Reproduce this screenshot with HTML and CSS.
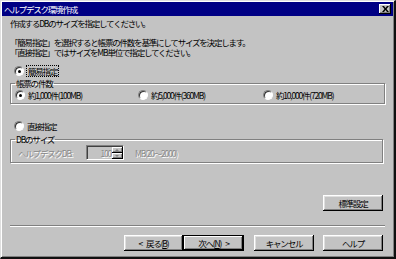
FILE: index.html
```html
<!DOCTYPE html>
<html lang="ja">
<head>
<meta charset="utf-8">
<link rel="stylesheet" href="styles.css">
</head>
<body>
<div class="window">
  <div class="titlebar">
    <span class="title">ヘルプデスク環境作成</span>
    <span class="close"><svg width="7" height="6" viewBox="0 0 7 6"><path d="M0 0h2l1.5 2 1.5-2h2l-2.5 3 2.5 3h-2l-1.5-2-1.5 2h-2l2.5-3z" fill="#000"/></svg></span>
  </div>
  <div class="content">
    <p class="line l1">作成するDBのサイズを指定してください。</p>
    <p class="line l2">「簡易指定」を選択すると帳票の件数を基準にしてサイズを決定します。</p>
    <p class="line l3">「直接指定」ではサイズをMB単位で指定してください。</p>

    <div class="opt opt1"><span class="radio checked"></span><span class="focus">簡易指定</span></div>
    <fieldset class="group g1">
      <legend>帳票の件数</legend>
      <div class="choices">
        <div class="opt c1"><span class="radio checked"></span><span>約1,000件(100MB)</span></div>
        <div class="opt c2"><span class="radio"></span><span>約5,000件(360MB)</span></div>
        <div class="opt c3"><span class="radio"></span><span>約10,000件(720MB)</span></div>
      </div>
    </fieldset>

    <div class="opt opt2"><span class="radio"></span><span>直接指定</span></div>
    <fieldset class="group g2">
      <legend>DBのサイズ</legend>
      <div class="sizerow">
        <span class="dis lbl">ヘルプデスクDB:</span>
        <span class="spin"><span class="val dis">100</span><span class="arrows"><span class="ab up"></span><span class="ab down"></span></span></span>
        <span class="dis range">MB(20～2000)</span>
      </div>
    </fieldset>

    <div class="stdrow"><button class="btn std">標準設定</button></div>
    <div class="sep"></div>
    <div class="btnrow">
      <button class="btn back"><span class="gap">&lt;</span>戻る(<u>B</u>)</button>
      <button class="btn next">次へ(<u>N</u>)<span class="gapl">&gt;</span></button>
      <button class="btn cancel">キャンセル</button>
      <button class="btn help">ヘルプ</button>
    </div>
  </div>
</div>
</body>
</html>
```
FILE: styles.css
```css
* { box-sizing: border-box; }
html, body { margin: 0; padding: 0; }
body {
  width: 396px; height: 259px; overflow: hidden;
  background: #c3c3c3;
  font-family: "Noto Sans CJK JP", "Noto Sans", sans-serif;
  font-size: 8.5px;
  color: #000;
}
.window {
  width: 396px; height: 259px;
  background: #c3c3c3;
  border-style: solid;
  border-width: 1px 2px 2px 1px;
  border-color: #dfdfdf #101010 #101010 #dfdfdf;
  box-shadow: inset 1px 1px 0 #fff, inset -1px -1px 0 #808080;
  padding: 1px;
  display: flex; flex-direction: column;
}
.titlebar {
  height: 14px;
  background: #000084;
  display: flex; align-items: center; justify-content: space-between;
  padding: 0 2px 0 2px;
  color: #fff;
}
.title { font-size: 8.5px; letter-spacing: -1.2px; line-height: 10px; }
.close {
  width: 12px; height: 10px;
  background: #c3c3c3;
  box-shadow: inset -1px -1px 0 #000, inset 1px 1px 0 #fff, inset -2px -2px 0 #808080;
  display: flex; align-items: center; justify-content: center;
  padding-bottom: 1px;
}
.content { padding: 0 9px 0 8px; position: relative; }
.line { margin: 0; line-height: 9px; letter-spacing: -1.2px; white-space: nowrap; }
.l1 { margin-top: 3px; }
.l2 { margin-top: 9px; line-height: 10px; }
.l3 { margin-top: 0; line-height: 10px; }
.opt { display: flex; align-items: center; gap: 3px; white-space: nowrap; letter-spacing: -1.2px; line-height: 10px; }
.opt1 { margin-top: 9px; margin-left: 4px; }
.focus { outline: 1px dotted #000; outline-offset: 0; padding: 0 1px; }
.radio {
  width: 10px; height: 10px; border-radius: 50%;
  background: #fff;
  border: 1px solid; border-color: #808080 #fff #fff #808080;
  box-shadow: inset 1px 1px 0 #303030;
  position: relative; flex: none;
}
.radio.checked::after {
  content: ""; position: absolute; left: 3px; top: 3px;
  width: 3px; height: 3px; border-radius: 50%; background: #000;
}
.group {
  margin: 0; padding: 0;
  border: 1px solid #808080;
  box-shadow: 1px 1px 0 #fff, inset 1px 1px 0 #fff;
  width: 375px;
}
.group legend {
  padding: 0 1px; margin-left: 4px;
  line-height: 9px; letter-spacing: -1.2px;
}
.g1 { margin-top: 3px; height: 25px; }
.choices { display: flex; padding: 2px 0 0 4px; }
.c1 { width: 123px; }
.c2 { width: 125px; }
.opt2 { margin-top: 17px; margin-left: 4px; }
.g2 { margin-top: 4px; height: 28px; width: 373px; }
.sizerow { display: flex; align-items: center; padding: 1px 0 0 7px; }
.dis { color: #8a8a8a; text-shadow: 1px 1px 0 #fff; letter-spacing: -1.2px; white-space: nowrap; }
.lbl { width: 68px; }
.spin {
  width: 38px; height: 15px;
  display: flex;
  border: 1px solid; border-color: #808080 #fff #fff #808080;
  box-shadow: inset 1px 1px 0 #404040;
  padding: 1px 0 0 1px;
}
.val { flex: 1; text-align: right; padding-right: 1px; line-height: 12px; }
.arrows { width: 11px; display: flex; flex-direction: column; }
.ab {
  flex: 1; background: #c3c3c3;
  box-shadow: inset -1px -1px 0 #000, inset 1px 1px 0 #fff, inset -2px -2px 0 #808080;
  position: relative;
}
.ab::after {
  content: ""; position: absolute; left: 3px; width: 0; height: 0;
  border-left: 2px solid transparent; border-right: 2px solid transparent;
}
.up::after { top: 2px; border-bottom: 2px solid #808080; }
.down::after { top: 2px; border-top: 2px solid #808080; }
.range { margin-left: 11px; }
.stdrow { display: flex; justify-content: flex-end; margin-top: 32px; padding-right: 1px; }
.btn {
  font-family: inherit; font-size: 8.5px; letter-spacing: -1.2px;
  height: 16px; width: 60px; padding: 0;
  border: 0; margin: 0;
  background: #c3c3c3; color: #000;
  box-shadow: inset -1px -1px 0 #000, inset 1px 1px 0 #fff, inset -2px -2px 0 #808080, inset 2px 2px 0 #dfdfdf;
  line-height: 14px;
}
.gap { margin-right: 4px; }
.gapl { margin-left: 4px; }
.btn u { text-decoration: underline; }
.sep { margin-top: 14px; height: 2px; border-top: 1px solid #808080; border-bottom: 1px solid #fff; width: 375px; }
.btnrow { display: flex; justify-content: flex-end; margin-top: 8px; padding-right: 1px; }
.back { width: 59px; }
.next { width: 61px; box-shadow: inset 0 0 0 1px #000, inset -2px -2px 0 #000, inset 2px 2px 0 #fff, inset -3px -3px 0 #808080; }
.cancel { margin-left: 10px; }
.help { margin-left: 9px; }
```
